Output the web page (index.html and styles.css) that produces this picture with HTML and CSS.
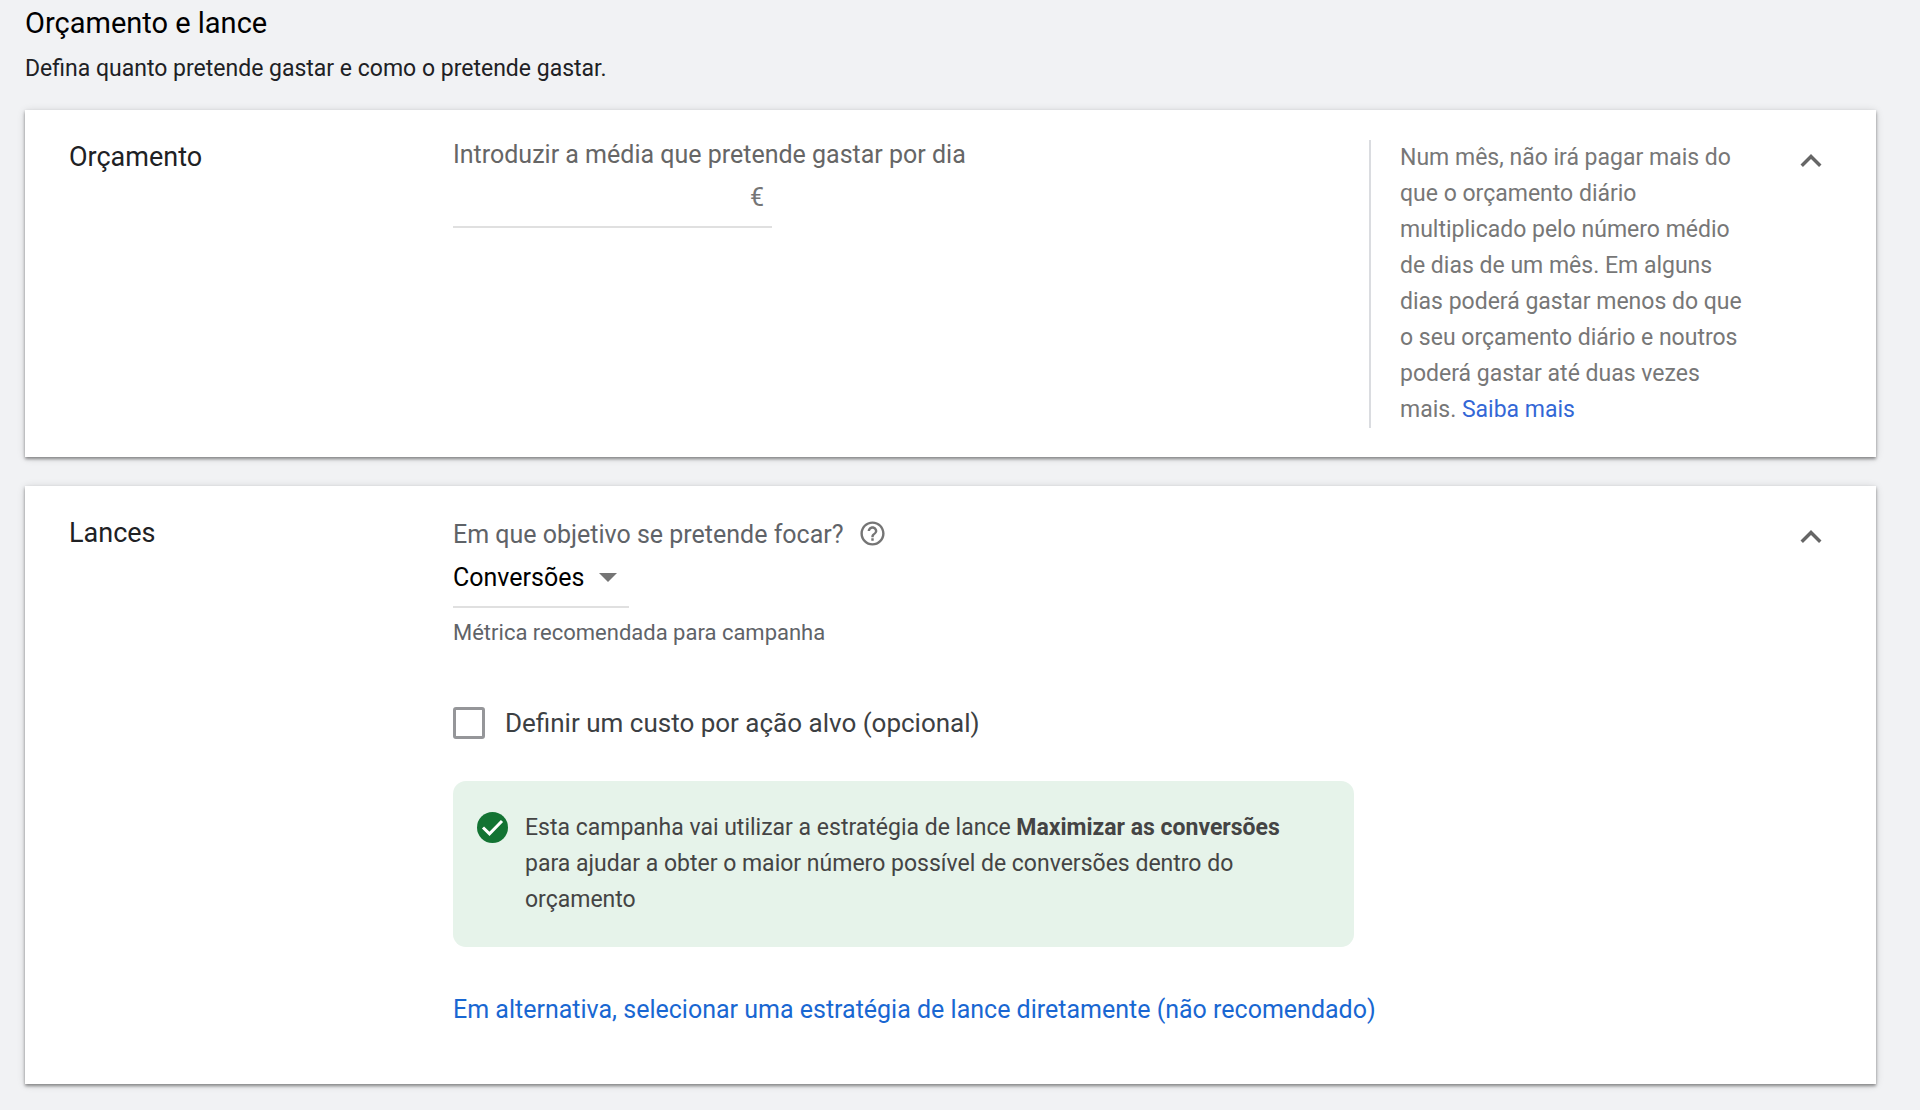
FILE: index.html
```html
<!DOCTYPE html>
<html lang="pt">
<head>
  <meta charset="UTF-8" />
  <meta name="viewport" content="width=device-width,initial-scale=1.0" />
  <title>Orçamento e lance</title>
  <link rel="stylesheet" href="styles.css">
</head>
<body>

<!-- HEADER -->
<header class="page-header">
  <h1>Orçamento e lance</h1>
  <p>Defina quanto pretende gastar e como o pretende gastar.</p>
</header>

<main>
  <!-- BUDGET -->
  <section class="card">
    <h2 class="card-title">Orçamento</h2>
    <div class="card-body">
      <label class="field-label" for="budget">Introduzir a média que pretende gastar por dia</label>
      <div class="money-field">
        <input id="budget" type="text" inputmode="decimal">
        <span>€</span>
      </div>
    </div>
    <aside class="card-help">
      <p>Num mês, não irá pagar mais do que o orçamento diário multiplicado pelo número médio de dias de um mês. Em alguns dias poderá gastar menos do que o seu orçamento diário e noutros poderá gastar até duas vezes mais. <a href="#">Saiba mais</a></p>
    </aside>
    <button class="toggle" type="button" aria-label="Fechar Orçamento">
      <svg viewBox="0 0 24 24"><path d="M12 8l-6 6 1.41 1.41L12 10.83l4.59 4.58L18 14z"/></svg>
    </button>
  </section>

  <!-- BIDDING -->
  <section class="card card-bidding">
    <h2 class="card-title">Lances</h2>
    <div class="card-body">
      <div class="question">
        <label for="goal">Em que objetivo se pretende focar?</label>
        <button class="help-button" type="button" aria-label="Ajuda">
          <svg viewBox="0 0 24 24"><path d="M11 18h2v-2h-2v2zm1-16C6.48 2 2 6.48 2 12s4.48 10 10 10 10-4.48 10-10S17.52 2 12 2zm0 18c-4.41 0-8-3.59-8-8s3.59-8 8-8 8 3.59 8 8-3.59 8-8 8zm0-14c-2.21 0-4 1.79-4 4h2c0-1.1.9-2 2-2s2 .9 2 2c0 2-3 1.75-3 5h2c0-2.25 3-2.5 3-5 0-2.21-1.79-4-4-4z"/></svg>
        </button>
      </div>
      <div class="select-field">
        <select id="goal">
          <option>Conversões</option>
        </select>
        <svg viewBox="0 0 18 9"><path d="M0 0h18L9 9z"/></svg>
      </div>
      <p class="hint">Métrica recomendada para campanha</p>

      <label class="check-row">
        <input type="checkbox">
        <span>Definir um custo por ação alvo (opcional)</span>
      </label>

      <div class="notice">
        <svg viewBox="0 0 31 31">
          <circle cx="15.5" cy="15.5" r="15.5"/>
          <path d="M6 15.5l6.5 6.3L25 9"/>
        </svg>
        <p>Esta campanha vai utilizar a estratégia de lance <strong>Maximizar as conversões</strong> para ajudar a obter o maior número possível de conversões dentro do orçamento</p>
      </div>

      <a class="alt-link" href="#">Em alternativa, selecionar uma estratégia de lance diretamente (não recomendado)</a>
    </div>
    <button class="toggle" type="button" aria-label="Fechar Lances">
      <svg viewBox="0 0 24 24"><path d="M12 8l-6 6 1.41 1.41L12 10.83l4.59 4.58L18 14z"/></svg>
    </button>
  </section>
</main>

</body>
</html>
```

FILE: styles.css
```css
* {
  box-sizing: border-box;
  margin: 0;
  padding: 0;
}
body {
  font-family: Roboto, sans-serif;
  font-size: 25px;
  line-height: 30px;
  background-color: #f1f2f4;
  color: #3c4043;
  padding: 5px 44px 24px 25px;
}
a {
  color: #1967d2;
  text-decoration: none;
}
button {
  border: none;
  background: none;
  cursor: pointer;
}
svg {
  display: block;
  flex: none;
}

/* HEADER */
.page-header {
  margin-bottom: 23px;
}
.page-header h1 {
  font-size: 29px;
  font-weight: 400;
  line-height: 36px;
  color: #000;
}
.page-header p {
  font-size: 23px;
  line-height: 36px;
  margin-top: 10px;
  color: #202124;
}

/* CARDS */
.card {
  display: flex;
  align-items: flex-start;
  background-color: #fff;
  padding: 30px 44px 29px;
  box-shadow: 0 2px 3px rgba(0,0,0,0.4), 0 1px 8px rgba(0,0,0,0.14);
}
.card-bidding {
  margin-top: 29px;
  padding-bottom: 59px;
}
.card-title {
  flex: 0 0 384px;
  font-size: 27px;
  font-weight: 400;
  line-height: 34px;
  color: #202124;
}
.card-body {
  flex: 1;
}
.card-help {
  flex: 0 0 386px;
  font-size: 23px;
  line-height: 36px;
  color: #777;
  border-left: 2px solid #dadce0;
  padding-left: 29px;
}
.card-help a {
  color: #3367d6;
}
.toggle {
  flex: none;
  margin-left: 35px;
}
.toggle svg {
  width: 42px;
  height: 42px;
  fill: #666;
}

/* BUDGET FIELD */
.field-label {
  display: block;
  color: #666;
}
.money-field {
  display: flex;
  width: 319px;
  padding: 13px 8px 13px 0;
  border-bottom: 2px solid #e0e0e0;
  color: #757575;
}
.money-field input {
  flex: 1;
  min-width: 0;
  border: none;
  outline: none;
  background: none;
  font: inherit;
}

/* BIDDING FIELDS */
.question {
  display: flex;
  align-items: flex-start;
  gap: 11px;
  line-height: 38px;
  color: #5f6368;
}
.help-button {
  padding: 3px;
}
.help-button svg {
  width: 29px;
  height: 29px;
  fill: #757575;
}
.select-field {
  display: flex;
  align-items: center;
  position: relative;
  width: 176px;
  border-bottom: 2px solid #e0e0e0;
}
.select-field select {
  width: 100%;
  padding: 9px 30px 13px 0;
  appearance: none;
  border: none;
  outline: none;
  background: none;
  font: inherit;
  color: #000;
}
.select-field svg {
  position: absolute;
  right: 12px;
  top: 19px;
  width: 18px;
  height: 9px;
  fill: #757575;
  pointer-events: none;
}
.hint {
  margin-top: 11px;
  font-size: 22px;
  line-height: 28px;
  color: #5f6368;
}
.check-row {
  display: flex;
  align-items: center;
  gap: 20px;
  margin-top: 60px;
  font-size: 26px;
  line-height: 32px;
}
.check-row input {
  width: 32px;
  height: 32px;
  appearance: none;
  border: 3px solid #959699;
  border-radius: 3px;
}
.check-row input:checked {
  background-color: #1967d2;
}

/* NOTICE */
.notice {
  display: flex;
  gap: 17px;
  max-width: 901px;
  margin-top: 42px;
  padding: 29px 24px;
  border-radius: 13px;
  background-color: #e6f3ea;
}
.notice svg {
  width: 31px;
  height: 31px;
  margin-top: 2px;
  fill: #137333;
}
.notice path {
  fill: none;
  stroke: #fff;
  stroke-width: 3;
}
.notice p {
  font-size: 23px;
  line-height: 36px;
  color: #444;
}
.alt-link {
  display: inline-block;
  margin-top: 48px;
}
```
